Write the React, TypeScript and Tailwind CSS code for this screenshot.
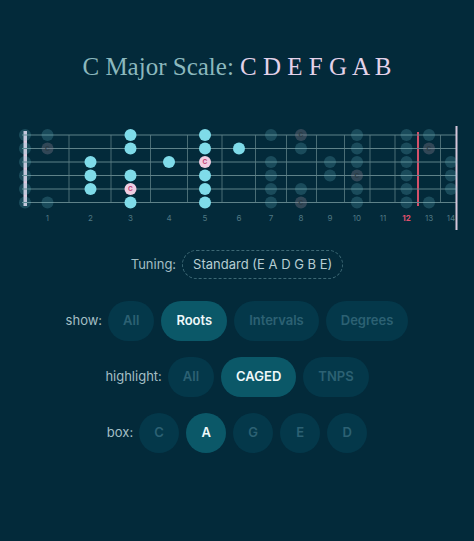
import React from 'react'

const STRING_Y = [135, 148.5, 162, 175.5, 189, 202.5]
// open pitch class per string, top (high e) to bottom (low E)
const OPEN = [4, 11, 7, 2, 9, 4]
const SCALE = [0, 2, 4, 5, 7, 9, 11]
const FRET_LINES = [69, 111, 150.5, 187.5, 222, 255.5, 286.5, 316.5, 344.5, 370, 395, 418, 440.5]
const DOT_X = [25, 47.5, 90.5, 130.5, 169, 205, 239, 271, 301, 330, 357, 383, 406.5, 429, 451]

function Fretboard(): React.ReactElement {
  const dots: React.ReactElement[] = []
  STRING_Y.forEach((y, s) => {
    DOT_X.forEach((x, f) => {
      const pc = (OPEN[s] + f) % 12
      if (!SCALE.includes(pc)) return
      const bright = f >= 2 && f <= 6
      const root = pc === 0
      const key = `${s}-${f}`
      if (bright && root) {
        dots.push(
          <g key={key}>
            <circle cx={x} cy={y} r={6} fill="#f0cde2" />
            <text x={x} y={y + 2.4} textAnchor="middle" fontSize="6.5" fontWeight="700" fill="#c2477a" fontFamily="Inter, sans-serif">C</text>
          </g>
        )
      } else if (bright) {
        dots.push(<circle key={key} cx={x} cy={y} r={6} fill="#7fdbe9" />)
      } else if (root) {
        dots.push(
          <g key={key}>
            <circle cx={x} cy={y} r={6} fill="#8a7e8e" fillOpacity={0.35} />
            <text x={x} y={y + 2.4} textAnchor="middle" fontSize="6.5" fontWeight="700" fill="#2a3c46" fontFamily="Inter, sans-serif">C</text>
          </g>
        )
      } else {
        dots.push(<circle key={key} cx={x} cy={y} r={6} fill="#6fc6d2" fillOpacity={0.22} />)
      }
    })
  })

  return (
    <svg className="mt-[34px] block" width={474} height={112} viewBox="0 118 474 112">
      {/* nut */}
      <rect x={23.5} y={131} width={3.5} height={75} fill="#dcc9df" />
      {FRET_LINES.map((x, i) =>
        i === 11 ? (
          <line key={x} x1={x} y1={132} x2={x} y2={206} stroke="#d4506a" strokeWidth={2} />
        ) : (
          <line key={x} x1={x} y1={135} x2={x} y2={202.5} stroke="#4a6d75" strokeWidth={1} />
        )
      )}
      {STRING_Y.map((y) => (
        <line key={y} x1={22} y1={y} x2={457} y2={y} stroke="#5f8289" strokeWidth={1} />
      ))}
      {/* end of visible board */}
      <line x1={456.5} y1={126} x2={456.5} y2={232} stroke="#d6c6db" strokeWidth={2} />
      {dots}
      {DOT_X.slice(1).map((x, i) => (
        <text
          key={x}
          x={x}
          y={221}
          textAnchor="middle"
          fontSize="8"
          fontWeight={i === 11 ? 700 : 400}
          fill={i === 11 ? '#e0506c' : '#4f7883'}
          fontFamily="Inter, sans-serif"
        >
          {i + 1}
        </text>
      ))}
    </svg>
  )
}

type PillProps = { label: string; active?: boolean; round?: boolean }

function Pill({ label, active, round }: PillProps): React.ReactElement {
  return (
    <button
      className={
        (round ? 'w-10 px-0 ' : 'px-[15px] ') +
        'h-10 rounded-full text-[13px] font-semibold ' +
        (active ? 'bg-[#0b5868] text-[#eef8fa]' : 'bg-[#04384a] text-[#2c6173]')
      }
    >
      {label}
    </button>
  )
}

function Row({ label, children }: { label: string; children: React.ReactNode }): React.ReactElement {
  return (
    <div className="flex items-center gap-[7px]">
      <span className="text-[13px] text-[#a3bfc5] mr-[-1px]">{label}</span>
      {children}
    </div>
  )
}

export default function App(): React.ReactElement {
  return (
    <div className="min-h-[541px] w-full bg-[#032a3a] flex flex-col items-center font-['Inter',sans-serif]">
      <h1 className="mt-[50px] text-[25px] leading-[34px] font-['Liberation_Serif',serif] text-[#8bb8bd]">
        C Major Scale: <span className="text-[#e4d2e9]">C D E F G A B</span>
      </h1>

      <Fretboard />

      <div className="mt-[20px] flex items-center gap-[6px]">
        <span className="text-[13px] text-[#a3bfc5]">Tuning:</span>
        <div className="h-[29px] px-[10px] flex items-center rounded-full border border-dashed border-[#3d6874] text-[13px] text-[#b7ced3]">
          Standard (E A D G B E)
        </div>
      </div>

      <div className="mt-[22px] flex flex-col items-center gap-4">
        <Row label="show:">
          <Pill label="All" />
          <Pill label="Roots" active />
          <Pill label="Intervals" />
          <Pill label="Degrees" />
        </Row>
        <Row label="highlight:">
          <Pill label="All" />
          <Pill label="CAGED" active />
          <Pill label="TNPS" />
        </Row>
        <Row label="box:">
          <Pill label="C" round />
          <Pill label="A" active round />
          <Pill label="G" round />
          <Pill label="E" round />
          <Pill label="D" round />
        </Row>
      </div>
    </div>
  )
}
